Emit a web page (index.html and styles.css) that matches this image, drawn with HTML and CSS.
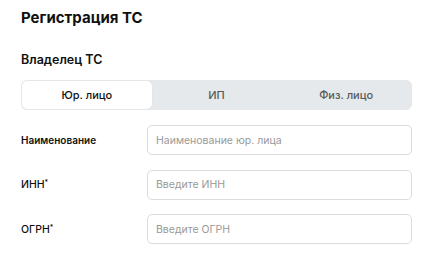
FILE: index.html
```html
<html><head>
  <meta charset="UTF-8">
  <meta name="viewport" content="width=device-width, initial-scale=1.0">
  <title>Регистрация ТС</title>
  <link rel="stylesheet" href="styles.css">
</head>
<body>
  <div class="form">
    <h1 class="title">Регистрация ТС</h1>
    <h2 class="subtitle">Владелец ТС</h2>
    <div class="tabs">
      <div class="tab active">Юр. лицо</div>
      <div class="tab">ИП</div>
      <div class="tab">Физ. лицо</div>
    </div>
    <div class="row">
      <label class="label label-small">Наименование</label>
      <input class="input" type="text" placeholder="Наименование юр. лица">
    </div>
    <div class="row">
      <label class="label">ИНН<sup>*</sup></label>
      <input class="input" type="text" placeholder="Введите ИНН">
    </div>
    <div class="row">
      <label class="label">ОГРН<sup>*</sup></label>
      <input class="input" type="text" placeholder="Введите ОГРН">
    </div>
  </div>
</body>
</html>
```

FILE: styles.css
```css
body, html {
  margin: 0;
  padding: 0;
  font-family: 'Inter', 'Noto Sans', sans-serif;
  background-color: #fff;
  color: #111;
}
.form {
  width: 391px;
  padding: 8px 0 0 21px;
}
.title {
  font-size: 15px;
  font-weight: 700;
  margin: 0;
  line-height: 20px;
}
.subtitle {
  font-size: 12.5px;
  font-weight: 600;
  margin: 23px 0 0;
  line-height: 18px;
}
.tabs {
  display: flex;
  margin-top: 11px;
  height: 30px;
  padding: 1px;
  box-sizing: border-box;
  background-color: #e5e9eb;
  border-radius: 6px;
}
.tab {
  flex: 1;
  display: flex;
  justify-content: center;
  align-items: center;
  font-size: 11px;
  font-weight: 500;
  color: #5a5a5a;
  border-radius: 5px;
}
.tab.active {
  background-color: #fff;
  color: #111;
  box-shadow: 0 0 1px rgba(0,0,0,0.1);
}
.row {
  display: flex;
  align-items: center;
  margin-top: 15px;
}
.row + .row {
  margin-top: 14.5px;
}
.label {
  width: 126px;
  font-size: 10.5px;
  font-weight: 500;
}
.label-small {
  font-size: 10px;
  font-weight: 600;
}
.label sup {
  font-size: 7px;
  vertical-align: 3px;
  line-height: 0;
}
.input {
  flex: 1;
  height: 30px;
  box-sizing: border-box;
  border: 1px solid #dcdcdc;
  border-radius: 5px;
  padding: 0 8px;
  font-family: inherit;
  font-size: 10.5px;
  outline: none;
}
.input::placeholder {
  color: #999;
}
```
